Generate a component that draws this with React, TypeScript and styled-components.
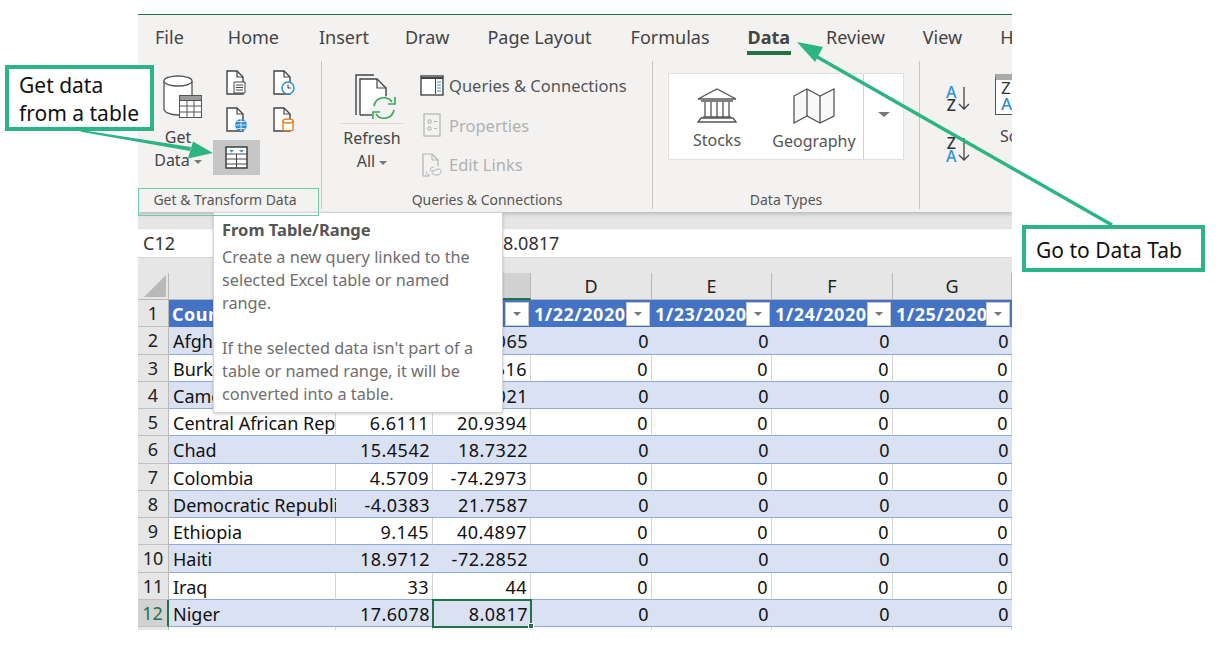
import styled, { createGlobalStyle } from "styled-components"

const FONT = `"Noto Sans", "Open Sans", sans-serif`
const GREEN = "#217346"
const MINT = "#2bb585"

// the ribbon font is a touch different from ours, so each tab carries its own nudge
const tabs = [
  { label: "File", nudge: 0 },
  { label: "Home", nudge: 5 },
  { label: "Insert", nudge: 1 },
  { label: "Draw", nudge: -3 },
  { label: "Page Layout", nudge: -1 },
  { label: "Formulas", nudge: 0 },
  { label: "Data", nudge: -1 },
  { label: "Review", nudge: -3 },
  { label: "View", nudge: -1 },
  { label: "Help", nudge: -1 },
]
const dates = ["1/22/2020", "1/23/2020", "1/24/2020", "1/25/2020"]
const letters = ["A", "B", "C", "D", "E", "F", "G"]

const rows = [
  ["Afghanistan", "33.9391", "67.7065"],
  ["Burkina Faso", "12.2383", "-1.5616"],
  ["Cameroon", "3.848", "11.5021"],
  ["Central African Republic", "6.6111", "20.9394"],
  ["Chad", "15.4542", "18.7322"],
  ["Colombia", "4.5709", "-74.2973"],
  ["Democratic Republic", "-4.0383", "21.7587"],
  ["Ethiopia", "9.145", "40.4897"],
  ["Haiti", "18.9712", "-72.2852"],
  ["Iraq", "33", "44"],
  ["Niger", "17.6078", "8.0817"],
]

const Doc = ({ children }: { children?: React.ReactNode }) => (
  <svg width="22" height="26" viewBox="0 0 22 26">
    <path d="M1 1h10l6 6v17H1z" fill="#fff" stroke="#444" strokeWidth="1.4" />
    <path d="M11 1v6h6" fill="none" stroke="#444" strokeWidth="1.2" />
    {children}
  </svg>
)

const DatabaseIcon = () => (
  <svg width="40" height="44" viewBox="0 0 40 44">
    <path d="M1 6v28c0 3 6 6 14 6s14-3 14-6V6" fill="#fff" stroke="#555" strokeWidth="1.3" />
    <ellipse cx="15" cy="6" rx="14" ry="5" fill="#fff" stroke="#555" strokeWidth="1.3" />
    <rect x="16.5" y="20.5" width="22" height="22" fill="#fff" stroke="#555" />
    <rect x="16.5" y="20.5" width="22" height="5" fill="#9b9b9b" stroke="#555" />
    <path d="M24 25v17M31 25v17M17 31h21M17 37h21" stroke="#555" />
  </svg>
)

const TableIcon = () => (
  <svg width="23" height="23" viewBox="0 0 23 23">
    <rect x="1" y="1" width="21" height="21" fill="#fff" stroke="#333" strokeWidth="1.4" />
    <path d="M1 8h21M1 13h21M1 18h21M11.5 8v14" stroke="#444" />
    <path d="M4 4h5l-2.500 2.500zM14 4h5l-2.500 2.500z" fill="#2e8fd8" />
  </svg>
)

const RefreshIcon = () => (
  <svg width="42" height="46" viewBox="0 0 42 46">
    <path d="M1 41V1h18" fill="none" stroke="#444" strokeWidth="1.4" />
    <path d="M5 41V5h17l9 9v10" fill="#fff" stroke="#444" strokeWidth="1.4" />
    <path d="M5 41h12" stroke="#444" strokeWidth="1.4" />
    <path d="M22 5v9h9" fill="none" stroke="#444" strokeWidth="1.2" />
    <circle cx="29" cy="34" r="12" fill="#f3f2f1" />
    <path d="M19 32a10 10 0 0 1 18-4M39 36a10 10 0 0 1-18 4" fill="none" stroke="#3aa655" strokeWidth="1.6" />
    <path d="M40 23v7h-7M18 45v-7h7" fill="none" stroke="#3aa655" strokeWidth="1.6" />
  </svg>
)

const PaneIcon = () => (
  <svg width="24" height="21" viewBox="0 0 24 21">
    <rect x="1" y="1" width="22" height="19" fill="#fff" stroke="#444" strokeWidth="1.4" />
    <path d="M1 3h22" stroke="#444" strokeWidth="2" />
    <path d="M15.500 4v15" stroke="#444" />
    <path d="M17 7h4M17 10h4M17 13h4M17 16h4" stroke="#2e8fd8" />
  </svg>
)

const PropertiesIcon = () => (
  <svg width="18" height="24" viewBox="0 0 18 24">
    <rect x="1" y="1" width="16" height="22" fill="#f3f2f1" stroke="#b3b3b3" strokeWidth="1.2" />
    <path d="M5 7h3v3H5zM5 14h3v3H5z" fill="none" stroke="#b3b3b3" />
    <path d="M11 8.500h3M11 15.500h3" stroke="#b3b3b3" />
  </svg>
)

const EditLinksIcon = () => (
  <svg width="21" height="24" viewBox="0 0 21 24">
    <path d="M1 23V1h9l6 6v6" fill="none" stroke="#b3b3b3" strokeWidth="1.2" />
    <path d="M10 1v6h6" fill="none" stroke="#b3b3b3" />
    <path d="M1 23h6" stroke="#b3b3b3" strokeWidth="1.2" />
    <path d="M12 14c-4 0-5 4-2 4s4-2 7-2 3 6-2 6-6-3-4-3M5 18c-2 2 0 4 3 4" fill="none" stroke="#b3b3b3" />
  </svg>
)

const BankIcon = () => (
  <svg width="40" height="35" viewBox="0 0 40 35">
    <path d="M1 11 20 1l19 10z" fill="none" stroke="#555" strokeWidth="1.3" />
    <path d="M4 13h32M6 29h28" stroke="#555" strokeWidth="1.3" />
    <path d="M8 14v15M14 14v15M20 14v15M26 14v15M32 14v15" stroke="#555" strokeWidth="1.3" />
    <path d="M1 34l3-4h32l3 4z" fill="none" stroke="#555" strokeWidth="1.3" />
  </svg>
)

const MapIcon = () => (
  <svg width="42" height="36" viewBox="0 0 42 36">
    <path d="M1 8 14 1l13 7 14-7v27l-14 7-13-7-13 7z" fill="#f8f8f8" stroke="#555" strokeWidth="1.3" />
    <path d="M14 1v27M27 8v27" stroke="#555" strokeWidth="1.3" />
  </svg>
)

const DownArrow = () => (
  <svg width="12" height="25" viewBox="0 0 12 25">
    <path d="M6 1v22M1 18l5 5 5-5" fill="none" stroke="#444" strokeWidth="1.3" />
  </svg>
)

const App = () => {
  return <Page>
    <GlobalStyle />
    <Workbook>
      <Chrome>
        <Ribbon>
          <TabBar>
            {tabs.map(t => <Tab key={t.label} $nudge={t.nudge} $active={t.label === "Data"}>{t.label}</Tab>)}
          </TabBar>
          <GroupRow>
            <Group $width={184}>
              <GroupBody>
                <LargeButton $width={70} $left={5}>
                  <IconSlot><DatabaseIcon /></IconSlot>
                  <LargeLabel>Get<br />Data <Caret /></LargeLabel>
                </LargeButton>
                <SmallGrid>
                  <SmallCell>
                    <Doc><path d="M8 12h11v11H8z" fill="#fff" stroke="#444" /><path d="M10 15h7M10 17.500h7M10 20h7" stroke="#444" /></Doc>
                  </SmallCell>
                  <SmallCell>
                    <Doc><circle cx="15" cy="18" r="6" fill="#fff" stroke="#2e8fd8" strokeWidth="1.5" /><path d="M15 14.500V18h3" fill="none" stroke="#333" /></Doc>
                  </SmallCell>
                  <SmallCell>
                    <Doc><circle cx="15" cy="18" r="6" fill="#2e8fd8" /><path d="M9 18h12M15 12v12M11 14.500h8M11 21.500h8" stroke="#fff" strokeWidth=".8" /></Doc>
                  </SmallCell>
                  <SmallCell>
                    <Doc><path d="M10 14v9c0 1 10 1 10 0v-9z" fill="#fff" stroke="#e07b1f" strokeWidth="1.4" /><ellipse cx="15" cy="14" rx="5" ry="2" fill="#fff" stroke="#e07b1f" strokeWidth="1.4" /></Doc>
                  </SmallCell>
                  <SmallCell $selected><TableIcon /></SmallCell>
                </SmallGrid>
              </GroupBody>
              <GroupLabel $inset={9}>Get &amp; Transform Data</GroupLabel>
            </Group>

            <Group $width={331}>
              <GroupBody>
                <LargeButton $width={66} $left={17}>
                  <RefreshSlot><RefreshIcon /></RefreshSlot>
                  <LargeLabel>Refresh<br />All <Caret /></LargeLabel>
                </LargeButton>
                <ActionList>
                  <Action><ActionIcon><PaneIcon /></ActionIcon>Queries &amp; Connections</Action>
                  <Action $disabled><ActionIcon><PropertiesIcon /></ActionIcon>Properties</Action>
                  <Action $disabled><ActionIcon><EditLinksIcon /></ActionIcon>Edit Links</Action>
                </ActionList>
              </GroupBody>
              <GroupLabel>Queries &amp; Connections</GroupLabel>
            </Group>

            <Group $width={267}>
              <GroupBody>
                <Gallery>
                  <GalleryItem $width={96}><BankIcon /><span>Stocks</span></GalleryItem>
                  <GalleryItem $width={98}><MapIcon /><span>Geography</span></GalleryItem>
                  <GalleryMore><Caret $big /></GalleryMore>
                </Gallery>
              </GroupBody>
              <GroupLabel>Data Types</GroupLabel>
            </Group>

            <LastGroup>
              <SortColumn>
                <SortButton>
                  <SortLetters><b>A</b><span>Z</span></SortLetters><DownArrow />
                </SortButton>
                <SortButton>
                  <SortLetters><span>Z</span><b>A</b></SortLetters><DownArrow />
                </SortButton>
              </SortColumn>
              <SortBig>
                <SortCard><span>Z</span><b>A</b></SortCard>
                <SortCaption>Sort</SortCaption>
              </SortBig>
            </LastGroup>
          </GroupRow>
        </Ribbon>

        <FormulaBar>
          <NameBox>C12</NameBox>
          <FormulaValue>8.0817</FormulaValue>
        </FormulaBar>
      </Chrome>

      <Sheet>
        <HeaderCell $corner><Corner /></HeaderCell>
        {letters.map(l => <HeaderCell key={l} $selected={l === "C"}>{l}</HeaderCell>)}

        <RowNumber>1</RowNumber>
        <TitleCell>Country<FilterButton><Caret /></FilterButton></TitleCell>
        <TitleCell>Lat<FilterButton><Caret /></FilterButton></TitleCell>
        <TitleCell>Long<FilterButton><Caret /></FilterButton></TitleCell>
        {dates.map(d => <TitleCell key={d}>{d}<FilterButton><Caret /></FilterButton></TitleCell>)}

        {rows.map((r, i) => {
          const band = i % 2 === 0
          const last = i === rows.length - 1
          return [
            <RowNumber key={`n${i}`} $selected={last}>{i + 2}</RowNumber>,
            <TextCell key={`a${i}`} $band={band}>{r[0]}</TextCell>,
            <NumberCell key={`b${i}`} $band={band}>{r[1]}</NumberCell>,
            <NumberCell key={`c${i}`} $band={band} $active={last}>{r[2]}{last && <Handle />}</NumberCell>,
            ...dates.map(d => <NumberCell key={d + i} $band={band}>0</NumberCell>),
          ]
        })}

        <RowStub />
        {letters.map(l => <EmptyCell key={l} />)}
      </Sheet>
    </Workbook>

    <Tooltip>
      <TooltipTitle>From Table/Range</TooltipTitle>
      <TooltipText>Create a new query linked to the<br />selected Excel table or named<br />range.</TooltipText>
      <TooltipText>If the selected data isn't part of a<br />table or named range, it will be<br />converted into a table.</TooltipText>
    </Tooltip>

    <GroupOutline />
    <Arrows width="1220" height="652" viewBox="0 0 1220 652">
      <path d="M75 129 L191 147 L190 151 L82 132z" fill={MINT} />
      <path d="M213 153 L193 141.500 L188 158.500z" fill={MINT} />
      <path d="M1112 225 L812 54" stroke={MINT} strokeWidth="3.500" />
      <path d="M797 42 L823 47 L815 62z" fill={MINT} />
    </Arrows>
    <DataCallout>Get data<br />from a table</DataCallout>
    <TabCallout>Go to Data Tab</TabCallout>
  </Page>
}

const GlobalStyle = createGlobalStyle`
  html, body {
    margin: 0;
    background: #fff;
  }
  * {
    box-sizing: border-box;
  }
`

const Page = styled.div`
  position: relative;
  width: 1220px;
  height: 652px;
  overflow: hidden;
  padding: 14px 0 0 138px;
  font-family: ${FONT};
  color: #111;
`

const Workbook = styled.div`
  width: 874px;
  height: 616px;
  border-top: 1px solid ${GREEN};
  overflow: hidden;
`

const Chrome = styled.div`
  background: #e6e6e6;
  padding-bottom: 15px;
`

const Ribbon = styled.div`
  height: 197px;
  background: #f3f2f1;
  box-shadow: 0 2px 4px rgba(0, 0, 0, .2);
  position: relative;
`

const TabBar = styled.div`
  height: 46px;
  display: flex;
  gap: 39px;
  padding-left: 17px;
  overflow: hidden;
`

const Tab = styled.div<{ $active?: boolean, $nudge: number }>`
  position: relative;
  margin-left: ${p => p.$nudge}px;
  font-size: 18px;
  line-height: 44px;
  white-space: nowrap;
  color: #444;
  font-weight: ${p => p.$active ? 700 : 400};

  &:after{
    content: '';
    display: ${p => p.$active ? 'block' : 'none'};
    position: absolute;
    left: -1px;
    right: -1px;
    top: 36px;
    height: 4px;
    background: ${GREEN};
  }
`

const GroupRow = styled.div`
  display: flex;
  height: 148px;
`

const Group = styled.div<{ $width: number }>`
  width: ${p => p.$width}px;
  flex: none;
  border-right: 1px solid #c8c6c4;
`

const GroupBody = styled.div`
  height: 129px;
  display: flex;
`

const GroupLabel = styled.div<{ $inset?: number }>`
  height: 19px;
  padding-right: ${p => p.$inset || 0}px;
  text-align: center;
  font-size: 14px;
  line-height: 20px;
  color: #555;
`

const LargeButton = styled.div<{ $width: number, $left: number }>`
  width: ${p => p.$width}px;
  margin-left: ${p => p.$left}px;
  display: flex;
  flex-direction: column;
  align-items: center;
`

const IconSlot = styled.div`
  height: 62px;
  padding-top: 14px;
  margin-left: 10px;
`

const RefreshSlot = styled.div`
  width: 62px;
  height: 63px;
  padding: 13px 0 0 14px;
  border-bottom: 1px solid #dcdcdc;
`

const LargeLabel = styled.div`
  font-size: 16px;
  line-height: 23px;
  color: #444;
  text-align: center;
  margin-top: 3px;
`

const Caret = styled.i<{ $big?: boolean }>`
  display: inline-block;
  vertical-align: middle;
  width: 0;
  height: 0;
  border-left: ${p => p.$big ? 6 : 4}px solid transparent;
  border-right: ${p => p.$big ? 6 : 4}px solid transparent;
  border-top: ${p => p.$big ? 5 : 4}px solid #777;
`

const SmallGrid = styled.div`
  display: grid;
  grid-template-columns: 47px 47px;
  grid-auto-rows: 37px;
  padding-top: 3px;
`

const SmallCell = styled.div<{ $selected?: boolean }>`
  display: flex;
  align-items: center;
  justify-content: center;
  background: ${p => p.$selected ? '#c6c6c6' : 'transparent'};
  margin-top: ${p => p.$selected ? 2 : 0}px;
`

const ActionList = styled.div`
  margin-left: 15px;
  padding-top: 5px;
  display: flex;
  flex-direction: column;
`

const Action = styled.div<{ $disabled?: boolean }>`
  height: 39.500px;
  display: flex;
  align-items: center;
  font-size: 16.500px;
  white-space: nowrap;
  color: ${p => p.$disabled ? '#b1b1b1' : '#555'};
`

const ActionIcon = styled.span`
  width: 29px;
  display: flex;
  justify-content: center;
  padding-right: 5px;
`

const Gallery = styled.div`
  display: flex;
  width: 236px;
  height: 87px;
  margin: 12px 0 0 15px;
  background: #fff;
  border: 1px solid #e1dfdd;
`

const GalleryItem = styled.div<{ $width: number }>`
  width: ${p => p.$width}px;
  padding-top: 14px;
  display: flex;
  flex-direction: column;
  align-items: center;
  gap: 6px;
  font-size: 16px;
  color: #555;
`

const GalleryMore = styled.div`
  flex: 1;
  display: flex;
  justify-content: center;
  padding-top: 38px;
  border-left: 1px solid #d2d0ce;
`

const LastGroup = styled.div`
  flex: 1;
  display: flex;
  overflow: hidden;
`

const SortColumn = styled.div`
  flex: none;
  padding: 25px 0 0 26px;
  width: 75px;
  display: flex;
  flex-direction: column;
  gap: 26px;
`

const SortButton = styled.div`
  display: flex;
  align-items: center;
  gap: 2px;
  height: 25px;
`

const SortLetters = styled.div`
  display: flex;
  flex-direction: column;
  align-items: center;
  font-size: 16px;
  line-height: 12.500px;
  font-weight: 500;
  color: #333;

  b{
    font-weight: 500;
    color: #2e8fd8;
  }
`

const SortBig = styled.div`
  padding-top: 13px;
  flex: none;
  width: 40px;
`

const SortCard = styled.div`
  width: 40px;
  height: 41px;
  border: 1.500px solid #555;
  border-top: 6px solid #aaa;
  background: #fff;
  padding-left: 5px;
  display: flex;
  flex-direction: column;
  font-size: 17px;
  line-height: 16px;
  color: #333;

  b{
    font-weight: 500;
    color: #2e8fd8;
  }
`

const SortCaption = styled.div`
  margin-top: 10px;
  padding-left: 5px;
  font-size: 16px;
  line-height: 23px;
  color: #444;
`

const FormulaBar = styled.div`
  margin-top: 16px;
  height: 30px;
  display: flex;
  align-items: center;
  background: #fff;
  border-top: 1px solid #e1e1e1;
  border-bottom: 1px solid #d8d8d8;
  font-size: 18px;
  color: #333;
`

const NameBox = styled.div`
  width: 365px;
  padding-left: 5px;
`

const FormulaValue = styled.div``

const Sheet = styled.div`
  display: grid;
  grid-template-columns: 31px 167px 97px 98px 121px 120px 121px 119px;
  grid-template-rows: 27px repeat(12, 27.250px) 10px;
  font-size: 18px;
  background: #fff;
`

const HeaderCell = styled.div<{ $selected?: boolean, $corner?: boolean }>`
  position: relative;
  display: flex;
  align-items: center;
  justify-content: center;
  background: ${p => p.$selected ? '#d2d2d2' : '#e6e6e6'};
  border-right: 1px solid #b8b8b8;
  border-bottom: ${p => p.$selected ? `2px solid ${GREEN}` : '1px solid #b8b8b8'};
  color: #222;
`

const Corner = styled.i`
  position: absolute;
  right: 2px;
  bottom: 2px;
  width: 0;
  height: 0;
  border-left: 22px solid transparent;
  border-bottom: 22px solid #b9b9b9;
`

const RowNumber = styled.div<{ $selected?: boolean }>`
  display: flex;
  align-items: center;
  justify-content: center;
  background: ${p => p.$selected ? '#d2d2d2' : '#e6e6e6'};
  color: ${p => p.$selected ? GREEN : '#222'};
  border-bottom: 1px solid #c0c0c0;
  border-right: ${p => p.$selected ? `2px solid ${GREEN}` : '1px solid #b8b8b8'};
  font-size: 18px;
`

const RowStub = styled.div`
  background: #e6e6e6;
  border-right: 1px solid #b8b8b8;
`

const EmptyCell = styled.div`
  border-right: 1px solid #d4d4d4;
`

const TitleCell = styled.div`
  position: relative;
  background: #4472c4;
  color: #fff;
  font-weight: 700;
  line-height: 28px;
  padding-left: 3px;
  letter-spacing: .5px;
  white-space: nowrap;
  overflow: hidden;
`

const FilterButton = styled.span`
  position: absolute;
  right: 2px;
  top: 2px;
  bottom: 1px;
  width: 24px;
  display: flex;
  align-items: center;
  justify-content: center;
  background: #fff;
  border: 1px solid #c8c8c8;
`

const BodyCell = styled.div<{ $band: boolean }>`
  position: relative;
  background: ${p => p.$band ? '#d9e1f2' : '#fff'};
  border-bottom: 1px solid #8ea9db;
  border-right: ${p => p.$band ? '0' : '1px solid #d4d4d4'};
  line-height: 28px;
  padding: 0 3px 0 4px;
  white-space: nowrap;
  overflow: hidden;
  color: #111;
`

const TextCell = styled(BodyCell)``

const NumberCell = styled(BodyCell)<{ $active?: boolean }>`
  text-align: right;
  letter-spacing: .5px;
  overflow: ${p => p.$active ? 'visible' : 'hidden'};
  outline: ${p => p.$active ? `2px solid ${GREEN}` : 'none'};
  outline-offset: -1px;
  z-index: ${p => p.$active ? 1 : 'auto'};
`

const Handle = styled.i`
  position: absolute;
  right: -3px;
  bottom: -3px;
  width: 6px;
  height: 6px;
  background: ${GREEN};
  border: 1px solid #fff;
`

const Tooltip = styled.div`
  position: absolute;
  left: 213px;
  top: 212px;
  width: 290px;
  height: 201px;
  padding: 7px 8px;
  background: #fff;
  border: 1px solid #d4d4d4;
  box-shadow: 0 1px 3px rgba(0, 0, 0, .2);
  white-space: nowrap;
  color: #6e6e6e;
`

const TooltipTitle = styled.div`
  font-size: 16.500px;
  font-weight: 700;
  line-height: 20px;
  color: #555;
  margin-bottom: 6px;
`

const TooltipText = styled.p`
  margin: 0 0 22.800px;
  font-size: 16.300px;
  line-height: 22.800px;
`

const GroupOutline = styled.div`
  position: absolute;
  left: 138px;
  top: 188px;
  width: 181px;
  height: 28px;
  border: 1.500px solid #6fcbaa;
`

const Arrows = styled.svg`
  position: absolute;
  left: 0;
  top: 0;
`

const DataCallout = styled.div`
  position: absolute;
  left: 5px;
  top: 65px;
  width: 149px;
  height: 66px;
  padding: 2px 0 0 10px;
  background: #fff;
  border: 4px solid ${MINT};
  font-size: 21px;
  line-height: 28px;
  color: #111;
`

const TabCallout = styled.div`
  position: absolute;
  left: 1022px;
  top: 225px;
  width: 183px;
  height: 47px;
  padding-left: 10px;
  background: #fff;
  border: 4px solid ${MINT};
  font-size: 21px;
  line-height: 42px;
  color: #111;
`

export default App
